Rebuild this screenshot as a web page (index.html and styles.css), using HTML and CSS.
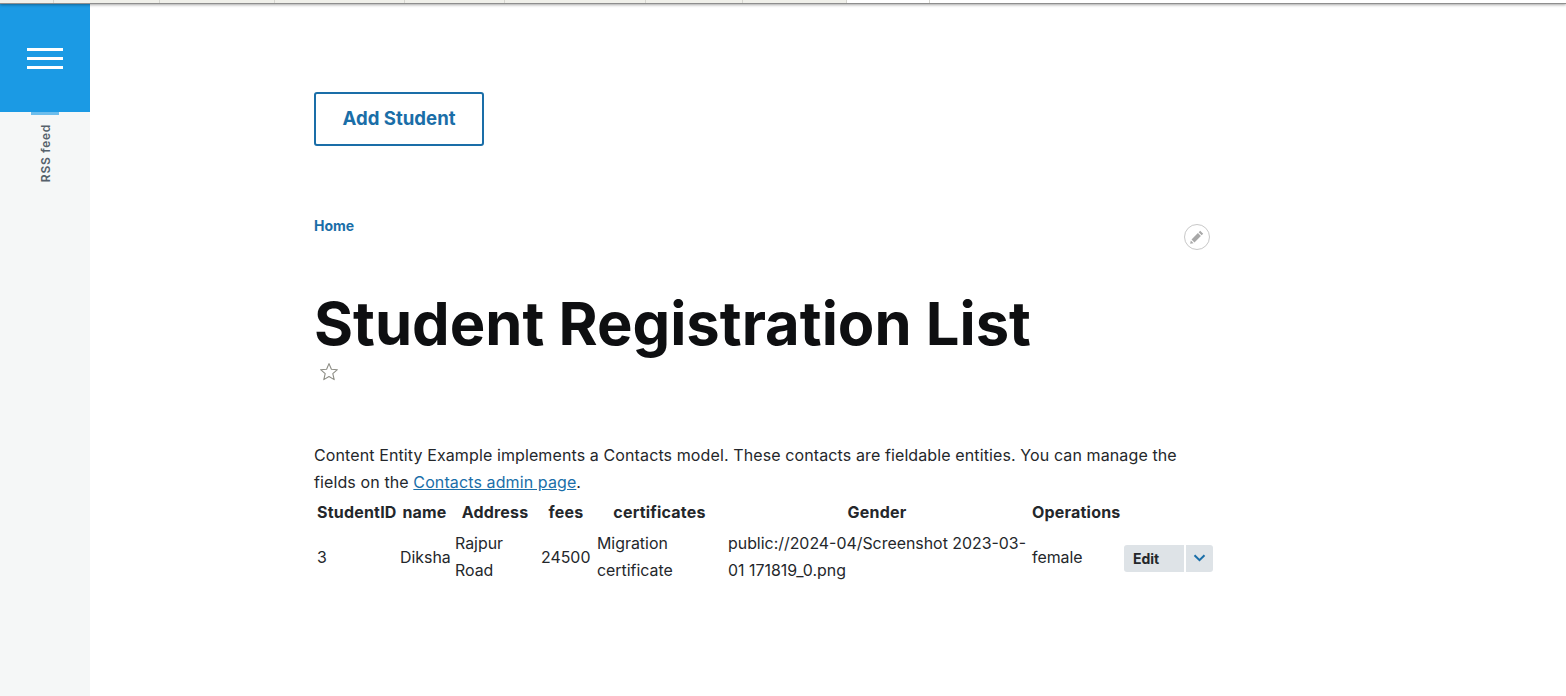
FILE: index.html
```html
<!DOCTYPE html>
<html lang="en">
<head>
  <meta charset="UTF-8" />
  <title>Student Registration List</title>
  <link rel="stylesheet" href="styles.css">
</head>
<body>

  <div class="top-strip">
    <span class="cell"></span><span class="cell"></span><span class="cell"></span>
    <span class="cell"></span><span class="cell"></span><span class="cell"></span>
    <span class="cell"></span><span class="cell"></span><span class="cell light"></span>
    <span class="cell light end"></span>
  </div>

  <div class="page">
    <aside class="sidebar">
      <button class="menu-btn" aria-label="Menu">
        <span class="bar"></span><span class="bar"></span><span class="bar"></span>
      </button>
      <div class="menu-tab"></div>
      <a class="rss-link" href="#">RSS feed</a>
    </aside>

    <main class="content">
      <a class="add-btn" href="#">Add Student</a>

      <div class="crumb-row">
        <a class="crumb" href="#">Home</a>
        <button class="edit-circle" aria-label="Edit">
          <svg width="16" height="16" viewBox="0 0 14 14">
            <path d="M9.8 1.6l2.6 2.6-1.3 1.3-2.6-2.6zM7.8 3.6l2.6 2.6-5.6 5.6-2.6-2.6zM1.6 10l2.4 2.4-3 .6z" fill="#a8a8a8"/>
          </svg>
        </button>
      </div>

      <h1 class="page-title">Student Registration List</h1>
      <svg class="star" width="20" height="20" viewBox="0 0 20 20">
        <path d="M10 1.6l2.4 5.6 6 .5-4.6 4 1.4 5.9-5.2-3.1-5.2 3.1 1.4-5.9-4.6-4 6-.5z" fill="none" stroke="#8d8d85" stroke-width="1.1" stroke-linejoin="round"/>
      </svg>

      <p class="intro">Content Entity Example implements a Contacts model. These contacts are fieldable entities. You can manage the fields on the <a href="#">Contacts admin page</a>.</p>

      <table class="student-table">
        <colgroup>
          <col class="c-id"><col class="c-name"><col class="c-address"><col class="c-fees">
          <col class="c-cert"><col class="c-file"><col class="c-gender"><col class="c-ops">
        </colgroup>
        <thead>
          <tr>
            <th>StudentID</th>
            <th>name</th>
            <th>Address</th>
            <th>fees</th>
            <th>certificates</th>
            <th>Gender</th>
            <th class="ops-head">Operations</th>
            <th></th>
          </tr>
        </thead>
        <tbody>
          <tr>
            <td>3</td>
            <td>Diksha</td>
            <td>Rajpur Road</td>
            <td>24500</td>
            <td>Migration certificate</td>
            <td>public://2024-04/Screenshot 2023-03-01 171819_0.png</td>
            <td>female</td>
            <td>
              <div class="ops">
                <a class="ops-edit" href="#">Edit</a>
                <button class="ops-toggle" aria-label="More">
                  <svg width="13" height="8" viewBox="0 0 12 8">
                    <path d="M1 1.2l5 5 5-5" fill="none" stroke="#1a6ea8" stroke-width="2"/>
                  </svg>
                </button>
              </div>
            </td>
          </tr>
        </tbody>
      </table>
    </main>
  </div>

</body>
</html>
```

FILE: styles.css
```css
* {
  box-sizing: border-box;
}

html, body {
  height: 100%;
}

body {
  margin: 0;
  font-family: Inter, 'Open Sans', sans-serif;
  color: #24272b;
  background: #fff;
  overflow: hidden;
}

/* strip of the table cut off at the top */
.top-strip {
  height: 4px;
  display: grid;
  grid-template-columns: 54px 106px 115px 130px 100px 141px 97px 104px 83px 1fr;
  background: #f0f0ea;
  border-bottom: 1px solid #8e8e8e;
  box-shadow: 0 1px 3px rgba(0, 0, 0, 0.35);
  position: relative;
  z-index: 2;
}

.cell {
  border-right: 1px solid #d6d6d0;
}

.cell.light {
  background: #fff;
}

.cell.end {
  border-right: none;
}

.page {
  display: flex;
  height: 692px;
}

.sidebar {
  width: 90px;
  flex-shrink: 0;
  background: #f5f7f7;
  display: flex;
  flex-direction: column;
  align-items: center;
}

.menu-btn {
  width: 90px;
  height: 108px;
  border: none;
  padding: 0;
  background: #1b9ae4;
  display: flex;
  flex-direction: column;
  align-items: center;
  justify-content: center;
  gap: 6px;
}

.bar {
  width: 36px;
  height: 3px;
  background: #fff;
}

.menu-tab {
  width: 28px;
  height: 3px;
  background: #6cbdec;
}

.rss-link {
  margin-top: 9px;
  writing-mode: vertical-rl;
  transform: rotate(180deg);
  font-size: 12px;
  font-weight: 600;
  letter-spacing: 0.7px;
  color: #55616b;
  text-decoration: none;
}

.content {
  width: 902px;
  margin-left: 224px;
  padding-top: 88px;
}

.add-btn {
  display: flex;
  align-items: center;
  justify-content: center;
  width: 170px;
  height: 54px;
  padding-bottom: 2px;
  border: 2px solid #1a6ea8;
  border-radius: 3px;
  color: #1a6ea8;
  font-size: 18.6px;
  font-weight: 700;
  text-decoration: none;
}

.crumb-row {
  display: flex;
  justify-content: space-between;
  align-items: flex-start;
  margin-top: 72px;
  padding-right: 6px;
}

.crumb {
  font-size: 14px;
  font-weight: 700;
  line-height: 16px;
  color: #1a6ea8;
  text-decoration: none;
}

.edit-circle {
  width: 26px;
  height: 26px;
  margin-top: 6px;
  padding: 0;
  border: 1px solid #c8c8c8;
  border-radius: 50%;
  background: #fff;
  display: flex;
  align-items: center;
  justify-content: center;
}

.page-title {
  margin: 37px 0 0;
  font-size: 59.7px;
  line-height: 72px;
  font-weight: 700;
  color: #0e0f11;
}

.star {
  display: block;
  margin: 3px 0 0 5px;
}

.intro {
  width: 880px;
  margin: 60px 0 0;
  font-size: 16px;
  letter-spacing: 0.11px;
  line-height: 27px;
}

.intro a {
  color: #1a6ea8;
}

.student-table {
  width: 902px;
  table-layout: fixed;
  border-collapse: collapse;
  font-size: 15.9px;
  line-height: 27px;
}

.c-id { width: 83px; }
.c-name { width: 55px; }
.c-address { width: 86px; }
.c-fees { width: 56px; }
.c-cert { width: 131px; }
.c-file { width: 304px; }
.c-gender { width: 92px; }
.c-ops { width: 95px; }

.student-table th {
  padding: 3px 3px 1px;
  font-size: 16px;
  font-weight: 700;
  letter-spacing: 0.2px;
  text-align: center;
  white-space: nowrap;
}

.student-table th.ops-head {
  text-align: left;
}

.student-table td {
  padding: 3px;
  vertical-align: middle;
}

.ops {
  display: flex;
  gap: 2px;
  margin-top: 2px;
}

.ops-edit {
  width: 60px;
  height: 27px;
  padding-left: 9px;
  background: #dee3e7;
  border-radius: 3px 0 0 3px;
  font-size: 14px;
  font-weight: 700;
  line-height: 27px;
  color: #24272b;
  text-decoration: none;
}

.ops-toggle {
  width: 27px;
  height: 27px;
  padding: 0;
  border: none;
  background: #dee3e7;
  border-radius: 0 3px 3px 0;
  display: flex;
  align-items: center;
  justify-content: center;
}
```
